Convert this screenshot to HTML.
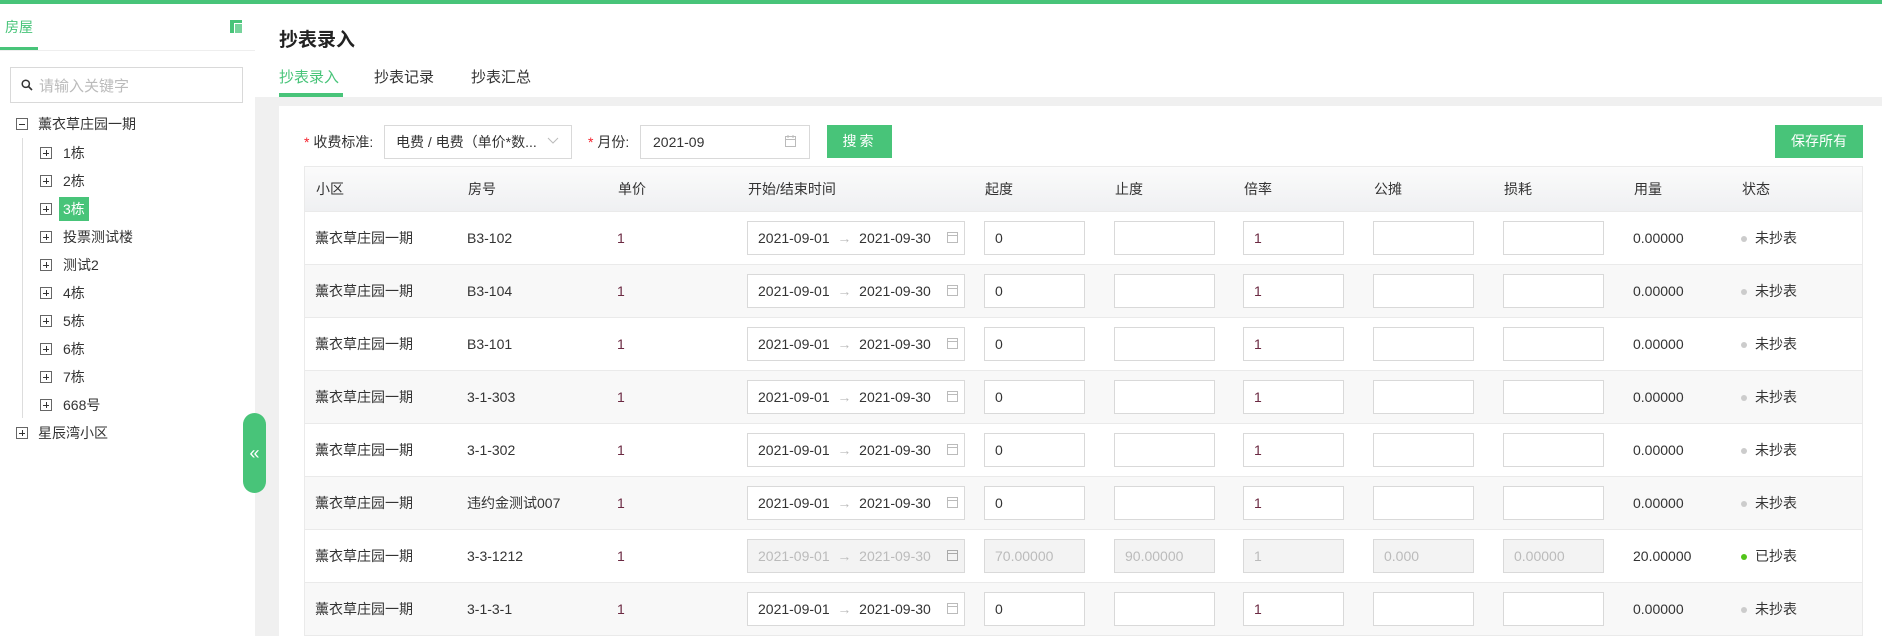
<!DOCTYPE html>
<html><head><meta charset="utf-8"><style>
*{margin:0;padding:0;box-sizing:border-box}
body{width:1882px;height:636px;overflow:hidden;background:#f0f0f0;font-family:"Liberation Sans","Noto Sans CJK SC",sans-serif;font-size:14px;color:#333;position:relative}
.a{position:absolute}
.top{left:0;top:0;width:1882px;height:4px;background:#48c479}
.side{left:0;top:4px;width:255px;height:632px;background:#fff}
.hd{left:255px;top:4px;width:1627px;height:93px;background:#fff}
.panel{left:279px;top:106px;width:1603px;height:530px;background:#fff}
.box{width:12px;height:12px;border:1px solid #666;background:#fff}
.box:before{content:"";position:absolute;left:2px;top:4.5px;width:6px;height:1px;background:#333}
.plus:after{content:"";position:absolute;left:4.5px;top:2px;width:1px;height:6px;background:#333}
.tr{font-size:14px;color:#333;line-height:20px}
.row{position:absolute;left:304px;width:1559px;height:53px;border-bottom:1px solid #eaeaea}
.row>*{position:absolute}
.t{top:0;line-height:53px}
.in{top:9px;height:34px;width:101px;border:1px solid #d9d9d9;background:#fff;line-height:32px;padding-left:10px}
.dr{left:443px;width:218px}
.dis{background:#f3f3f3;color:#bbb}
.dot{width:6px;height:6px;border-radius:3px;background:#ccc;top:24px}
.cal{position:absolute;right:6px;top:9px}
</style></head><body>
<div class="a top"></div>
<div class="a side">
 <div class="a" style="left:5px;top:13px;color:#48c479;font-size:14px">房屋</div>
 <div class="a" style="left:0;top:43px;width:38px;height:3px;background:#48c479"></div>
 <div class="a" style="left:0;top:46px;width:255px;height:1px;background:#eee"></div>
 <svg class="a" style="left:230px;top:16px" width="12" height="13"><rect x="0" y="0" width="12" height="3" fill="#48c479"/><rect x="0" y="3" width="4" height="10" fill="#48c479"/><rect x="5" y="4" width="7" height="9" fill="#48c479" opacity=".75"/></svg>
 <div class="a" style="left:10px;top:63px;width:233px;height:36px;border:1px solid #d9d9d9"></div>
 <svg class="a" style="left:21px;top:75px" width="12" height="12"><circle cx="4.8" cy="4.8" r="3.6" stroke="#333" stroke-width="1.5" fill="none"/><line x1="7.5" y1="7.5" x2="11" y2="11" stroke="#333" stroke-width="1.6"/></svg>
 <div class="a" style="left:39px;top:71px;color:#bbb;font-size:15px">请输入关键字</div>
 <div class="a box" style="left:16px;top:114px"></div><div class="a tr" style="left:38px;top:110px">薰衣草庄园一期</div>
 <div class="a" style="left:22px;top:134px;width:1px;height:280px;background:#ddd"></div>
 <div class="a box plus" style="left:40px;top:143px"></div><div class="a tr" style="left:63px;top:139px">1栋</div>
 <div class="a box plus" style="left:40px;top:171px"></div><div class="a tr" style="left:63px;top:167px">2栋</div>
 <div class="a box plus" style="left:40px;top:199px"></div><div class="a tr" style="left:59px;top:193px;background:#48c479;color:#fff;padding:2px 4px;line-height:20px">3栋</div>
 <div class="a box plus" style="left:40px;top:227px"></div><div class="a tr" style="left:63px;top:223px">投票测试楼</div>
 <div class="a box plus" style="left:40px;top:255px"></div><div class="a tr" style="left:63px;top:251px">测试2</div>
 <div class="a box plus" style="left:40px;top:283px"></div><div class="a tr" style="left:63px;top:279px">4栋</div>
 <div class="a box plus" style="left:40px;top:311px"></div><div class="a tr" style="left:63px;top:307px">5栋</div>
 <div class="a box plus" style="left:40px;top:339px"></div><div class="a tr" style="left:63px;top:335px">6栋</div>
 <div class="a box plus" style="left:40px;top:367px"></div><div class="a tr" style="left:63px;top:363px">7栋</div>
 <div class="a box plus" style="left:40px;top:395px"></div><div class="a tr" style="left:63px;top:391px">668号</div>
 <div class="a box plus" style="left:16px;top:423px"></div><div class="a tr" style="left:38px;top:419px">星辰湾小区</div>
</div>
<div class="a" style="left:243px;top:413px;width:23px;height:80px;border-radius:12px;background:#48c479;color:#fff;font-size:18px;line-height:80px;text-align:center">«</div>
<div class="a hd">
 <div class="a" style="left:24px;top:21px;font-size:19px;font-weight:bold;color:#222">抄表录入</div>
 <div class="a" style="left:24px;top:62px;font-size:15px;color:#48c479">抄表录入</div>
 <div class="a" style="left:119px;top:62px;font-size:15px;color:#333">抄表记录</div>
 <div class="a" style="left:216px;top:62px;font-size:15px;color:#333">抄表汇总</div>
 <div class="a" style="left:24px;top:89px;width:64px;height:4px;background:#48c479"></div>
</div>
<div class="a panel"></div>
<div class="a" style="left:304px;top:132px;font-size:14px"><span style="color:#f5222d">*</span> 收费标准:</div>
<div class="a" style="left:384px;top:125px;width:188px;height:34px;border:1px solid #d9d9d9;background:#fff;line-height:32px;padding-left:11px">电费 / 电费（单价*数...</div>
<svg class="a" style="left:547px;top:137px" width="12" height="8"><polyline points="1,1 6,6 11,1" fill="none" stroke="#bbb" stroke-width="1"/></svg>
<div class="a" style="left:588px;top:132px"><span style="color:#f5222d">*</span> 月份:</div>
<div class="a" style="left:640px;top:125px;width:170px;height:34px;border:1px solid #d9d9d9;background:#fff;line-height:32px;padding-left:12px">2021-09</div>
<svg class="a" style="left:785px;top:135px" width="11" height="12"><rect x=".5" y="1.5" width="10" height="10" fill="none" stroke="#bbb"/><line x1="0" y1="4.5" x2="11" y2="4.5" stroke="#bbb"/><line x1="3" y1="0" x2="3" y2="3" stroke="#bbb"/><line x1="8" y1="0" x2="8" y2="3" stroke="#bbb"/></svg>
<div class="a" style="left:827px;top:125px;width:65px;height:33px;background:#48c479;color:#fff;line-height:33px;text-align:center;letter-spacing:3px">搜索</div>
<div class="a" style="left:1775px;top:125px;width:88px;height:33px;background:#48c479;color:#fff;line-height:33px;text-align:center">保存所有</div>
<div class="row" style="top:166px;height:46px;background:linear-gradient(#fbfbfb,#eff0f2);border:1px solid #eaeaea">
 <span class="t" style="left:11px;line-height:44px">小区</span><span class="t" style="left:163px;line-height:44px">房号</span><span class="t" style="left:313px;line-height:44px">单价</span><span class="t" style="left:443px;line-height:44px">开始/结束时间</span><span class="t" style="left:680px;line-height:44px">起度</span><span class="t" style="left:810px;line-height:44px">止度</span><span class="t" style="left:939px;line-height:44px">倍率</span><span class="t" style="left:1069px;line-height:44px">公摊</span><span class="t" style="left:1199px;line-height:44px">损耗</span><span class="t" style="left:1329px;line-height:44px">用量</span><span class="t" style="left:1437px;line-height:44px">状态</span>
</div>
<div class="row" style="top:212px;background:#fff"><span class="t" style="left:11px">薰衣草庄园一期</span><span class="t" style="left:163px">B3-102</span><span class="t" style="left:313px;color:#6b2942">1</span><span class="in dr">2021-09-01 <span style="color:#bbb">&nbsp;→&nbsp;</span> 2021-09-30<svg class="cal" width="11" height="12"><rect x=".5" y="1.5" width="10" height="10" fill="none" stroke="#bbb"/><line x1="0" y1="4.5" x2="11" y2="4.5" stroke="#bbb"/></svg></span><span class="in" style="left:680px">0</span><span class="in" style="left:810px"></span><span class="in" style="left:939px;color:#6b2942">1</span><span class="in" style="left:1069px"></span><span class="in" style="left:1199px"></span><span class="t" style="left:1329px">0.00000</span><span class="dot" style="left:1437px"></span><span class="t" style="left:1451px">未抄表</span></div>
<div class="row" style="top:265px;background:#f8f8f8"><span class="t" style="left:11px">薰衣草庄园一期</span><span class="t" style="left:163px">B3-104</span><span class="t" style="left:313px;color:#6b2942">1</span><span class="in dr">2021-09-01 <span style="color:#bbb">&nbsp;→&nbsp;</span> 2021-09-30<svg class="cal" width="11" height="12"><rect x=".5" y="1.5" width="10" height="10" fill="none" stroke="#bbb"/><line x1="0" y1="4.5" x2="11" y2="4.5" stroke="#bbb"/></svg></span><span class="in" style="left:680px">0</span><span class="in" style="left:810px"></span><span class="in" style="left:939px;color:#6b2942">1</span><span class="in" style="left:1069px"></span><span class="in" style="left:1199px"></span><span class="t" style="left:1329px">0.00000</span><span class="dot" style="left:1437px"></span><span class="t" style="left:1451px">未抄表</span></div>
<div class="row" style="top:318px;background:#fff"><span class="t" style="left:11px">薰衣草庄园一期</span><span class="t" style="left:163px">B3-101</span><span class="t" style="left:313px;color:#6b2942">1</span><span class="in dr">2021-09-01 <span style="color:#bbb">&nbsp;→&nbsp;</span> 2021-09-30<svg class="cal" width="11" height="12"><rect x=".5" y="1.5" width="10" height="10" fill="none" stroke="#bbb"/><line x1="0" y1="4.5" x2="11" y2="4.5" stroke="#bbb"/></svg></span><span class="in" style="left:680px">0</span><span class="in" style="left:810px"></span><span class="in" style="left:939px;color:#6b2942">1</span><span class="in" style="left:1069px"></span><span class="in" style="left:1199px"></span><span class="t" style="left:1329px">0.00000</span><span class="dot" style="left:1437px"></span><span class="t" style="left:1451px">未抄表</span></div>
<div class="row" style="top:371px;background:#f8f8f8"><span class="t" style="left:11px">薰衣草庄园一期</span><span class="t" style="left:163px">3-1-303</span><span class="t" style="left:313px;color:#6b2942">1</span><span class="in dr">2021-09-01 <span style="color:#bbb">&nbsp;→&nbsp;</span> 2021-09-30<svg class="cal" width="11" height="12"><rect x=".5" y="1.5" width="10" height="10" fill="none" stroke="#bbb"/><line x1="0" y1="4.5" x2="11" y2="4.5" stroke="#bbb"/></svg></span><span class="in" style="left:680px">0</span><span class="in" style="left:810px"></span><span class="in" style="left:939px;color:#6b2942">1</span><span class="in" style="left:1069px"></span><span class="in" style="left:1199px"></span><span class="t" style="left:1329px">0.00000</span><span class="dot" style="left:1437px"></span><span class="t" style="left:1451px">未抄表</span></div>
<div class="row" style="top:424px;background:#fff"><span class="t" style="left:11px">薰衣草庄园一期</span><span class="t" style="left:163px">3-1-302</span><span class="t" style="left:313px;color:#6b2942">1</span><span class="in dr">2021-09-01 <span style="color:#bbb">&nbsp;→&nbsp;</span> 2021-09-30<svg class="cal" width="11" height="12"><rect x=".5" y="1.5" width="10" height="10" fill="none" stroke="#bbb"/><line x1="0" y1="4.5" x2="11" y2="4.5" stroke="#bbb"/></svg></span><span class="in" style="left:680px">0</span><span class="in" style="left:810px"></span><span class="in" style="left:939px;color:#6b2942">1</span><span class="in" style="left:1069px"></span><span class="in" style="left:1199px"></span><span class="t" style="left:1329px">0.00000</span><span class="dot" style="left:1437px"></span><span class="t" style="left:1451px">未抄表</span></div>
<div class="row" style="top:477px;background:#f8f8f8"><span class="t" style="left:11px">薰衣草庄园一期</span><span class="t" style="left:163px">违约金测试007</span><span class="t" style="left:313px;color:#6b2942">1</span><span class="in dr">2021-09-01 <span style="color:#bbb">&nbsp;→&nbsp;</span> 2021-09-30<svg class="cal" width="11" height="12"><rect x=".5" y="1.5" width="10" height="10" fill="none" stroke="#bbb"/><line x1="0" y1="4.5" x2="11" y2="4.5" stroke="#bbb"/></svg></span><span class="in" style="left:680px">0</span><span class="in" style="left:810px"></span><span class="in" style="left:939px;color:#6b2942">1</span><span class="in" style="left:1069px"></span><span class="in" style="left:1199px"></span><span class="t" style="left:1329px">0.00000</span><span class="dot" style="left:1437px"></span><span class="t" style="left:1451px">未抄表</span></div>
<div class="row" style="top:530px;background:#fff"><span class="t" style="left:11px">薰衣草庄园一期</span><span class="t" style="left:163px">3-3-1212</span><span class="t" style="left:313px;color:#6b2942">1</span><span class="in dr dis">2021-09-01 <span style="color:#bbb">&nbsp;→&nbsp;</span> 2021-09-30<svg class="cal" width="11" height="12"><rect x=".5" y="1.5" width="10" height="10" fill="none" stroke="#aaa"/><line x1="0" y1="4.5" x2="11" y2="4.5" stroke="#aaa"/></svg></span><span class="in dis" style="left:680px">70.00000</span><span class="in dis" style="left:810px">90.00000</span><span class="in dis" style="left:939px">1</span><span class="in dis" style="left:1069px">0.000</span><span class="in dis" style="left:1199px">0.00000</span><span class="t" style="left:1329px">20.00000</span><span class="dot" style="left:1437px;background:#52c41a"></span><span class="t" style="left:1451px">已抄表</span></div>
<div class="row" style="top:583px;background:#f8f8f8"><span class="t" style="left:11px">薰衣草庄园一期</span><span class="t" style="left:163px">3-1-3-1</span><span class="t" style="left:313px;color:#6b2942">1</span><span class="in dr">2021-09-01 <span style="color:#bbb">&nbsp;→&nbsp;</span> 2021-09-30<svg class="cal" width="11" height="12"><rect x=".5" y="1.5" width="10" height="10" fill="none" stroke="#bbb"/><line x1="0" y1="4.5" x2="11" y2="4.5" stroke="#bbb"/></svg></span><span class="in" style="left:680px">0</span><span class="in" style="left:810px"></span><span class="in" style="left:939px;color:#6b2942">1</span><span class="in" style="left:1069px"></span><span class="in" style="left:1199px"></span><span class="t" style="left:1329px">0.00000</span><span class="dot" style="left:1437px"></span><span class="t" style="left:1451px">未抄表</span></div>
<div class="a" style="left:304px;top:166px;width:1px;height:470px;background:#eaeaea"></div>
<div class="a" style="left:1862px;top:166px;width:1px;height:470px;background:#eaeaea"></div>
</body></html>
